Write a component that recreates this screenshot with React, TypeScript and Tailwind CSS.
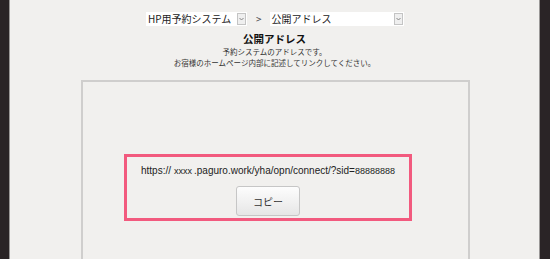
import React from "react";

const jp = { fontFamily: '"Noto Sans CJK JP", "Noto Sans", sans-serif' };
const ar = { fontFamily: '"Liberation Sans", Arial, sans-serif' };

function Select({ label, width }: { label: string; width: string }) {
  return (
    <div className={`flex h-[14px] items-center bg-white ${width}`}>
      <span className="flex-1 pl-[2px] text-[10px] leading-none text-[#222]" style={jp}>
        {label}
      </span>
      <span className="mr-[1px] flex h-[12px] w-[9px] items-center justify-center border border-[#c4c4c4] bg-[#efefef]">
        <svg width="5" height="4" viewBox="0 0 5 4">
          <path d="M0.5 1 L2.5 3 L4.5 1" stroke="#7a7a7a" strokeWidth="0.9" fill="none" />
        </svg>
      </span>
    </div>
  );
}

export default function App() {
  return (
    <div className="flex h-[259px] w-[550px] overflow-hidden bg-[#2a2426]">
      <div className="w-[9px] shrink-0 bg-[#2a2426]" />
      <div className="flex w-[531px] shrink-0 flex-col border-x border-[#9a9897] bg-[#f1f0ee]">
        <div className="mt-[12px] flex items-center pl-[136px]">
          <Select label="HP用予約システム" width="w-[101px]" />
          <span className="ml-[9px] mr-[8px] text-[10px] leading-none text-[#444]" style={jp}>
            &gt;
          </span>
          <Select label="公開アドレス" width="w-[134px]" />
        </div>
        <div className="mt-[6px] text-center text-[10.5px] font-bold leading-[14px] text-[#111]" style={jp}>
          公開アドレス
        </div>
        <div className="text-center text-[7.5px] leading-[11px] text-[#333]" style={jp}>
          予約システムのアドレスです。
          <br />
          お宿様のホームページ内部に記述してリンクしてください。
        </div>
        <div className="ml-[71px] mt-[12px] w-[389px] flex-1 border-2 border-b-0 border-[#cfcecd] bg-[#f1f0ee] pt-[72px]">
          <div className="ml-[41px] flex h-[67px] w-[288px] flex-col items-center border-[3px] border-[#f25a7e] pt-[7px]">
            <div className="flex items-baseline text-[10px] leading-[14px] text-[#222]" style={ar}>
              <span>https://</span>
              <span className="ml-[3px] text-[9px]">xxxx</span>
              <span className="ml-[2px]">.paguro.work/yha/opn/connect/?sid=</span>
              <span className="text-[9px]">88888888</span>
            </div>
            <button
              className="mt-[8px] h-[30px] w-[64px] rounded-[3px] border border-[#c6c6c6] bg-gradient-to-b from-[#fdfdfd] to-[#e6e6e6] text-[10px] text-[#333]"
              style={jp}
            >
              コピー
            </button>
          </div>
        </div>
      </div>
      <div className="w-[10px] shrink-0 bg-[#2a2426]" />
    </div>
  );
}
